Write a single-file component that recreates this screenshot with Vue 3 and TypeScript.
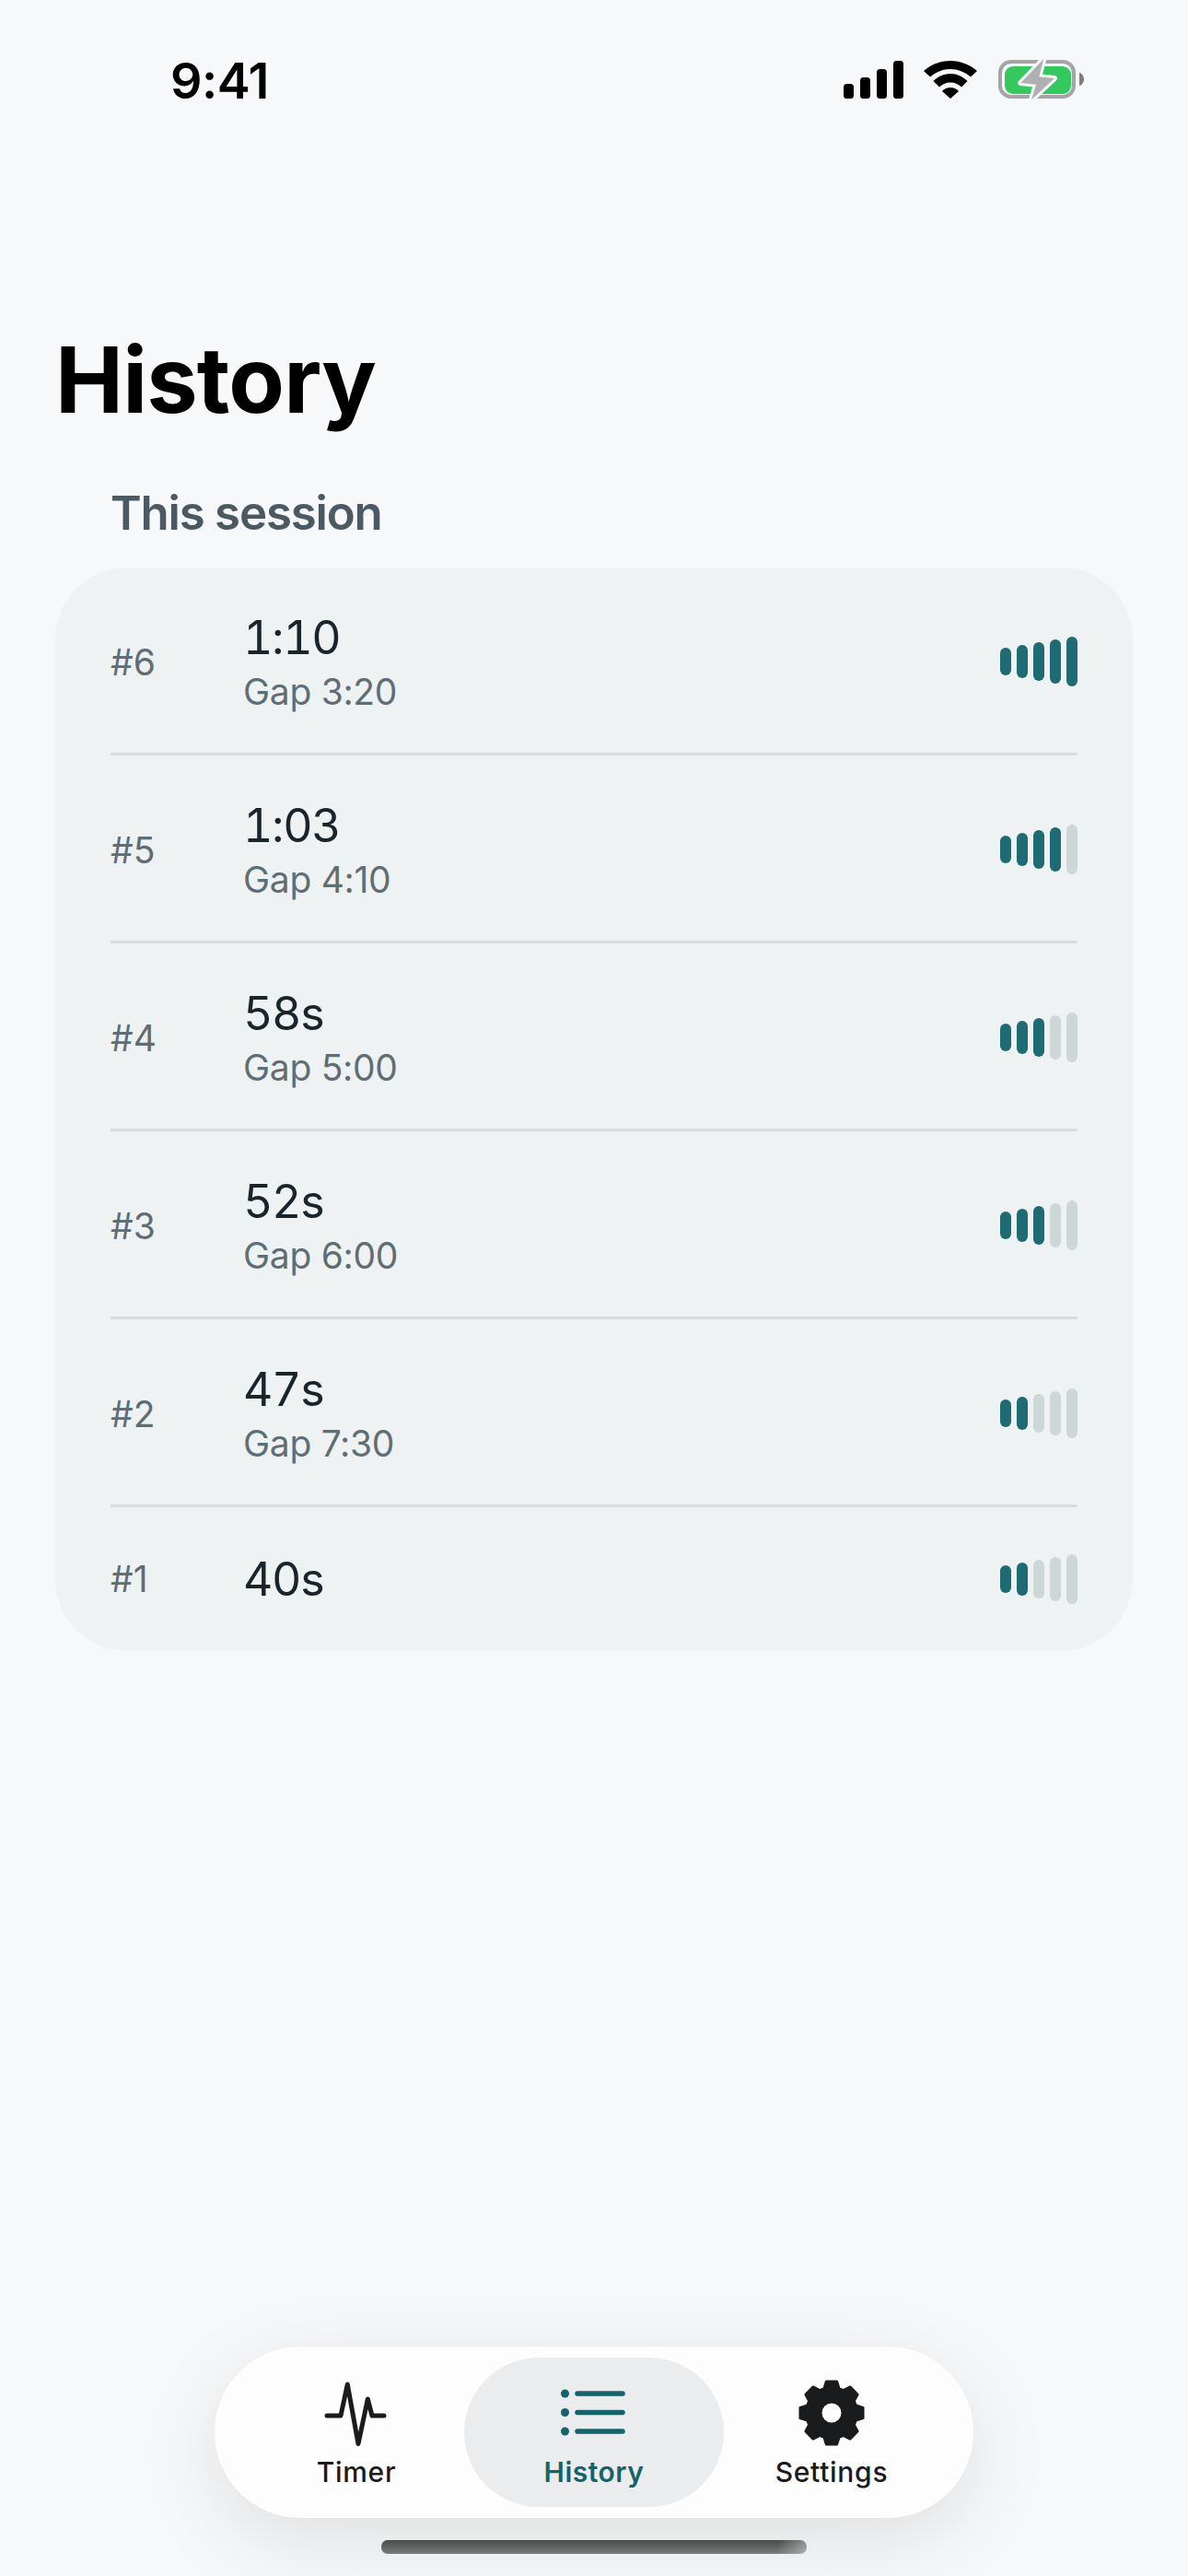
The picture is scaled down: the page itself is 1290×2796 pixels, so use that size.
<script setup lang="ts">
interface Row { rank: string; time: string; gap?: string; level: number }
const rows: Row[] = [
  { rank: '#6', time: '1:10', gap: 'Gap 3:20', level: 5 },
  { rank: '#5', time: '1:03', gap: 'Gap 4:10', level: 4 },
  { rank: '#4', time: '58s', gap: 'Gap 5:00', level: 3 },
  { rank: '#3', time: '52s', gap: 'Gap 6:00', level: 3 },
  { rank: '#2', time: '47s', gap: 'Gap 7:30', level: 2 },
  { rank: '#1', time: '40s', level: 2 },
]
const bars = [1, 2, 3, 4, 5]

function gearPath(): string {
  const cx = 40, cy = 40, teeth = 8
  const pts: string[] = []
  const rr = 27.5, ro = 34.5
  for (let i = 0; i < teeth; i++) {
    const a = (i * Math.PI * 2) / teeth - Math.PI / 2
    const spec: [number, number][] = [[rr, -0.30], [ro, -0.165], [ro, 0.165], [rr, 0.30]]
    for (const [r, d] of spec) {
      pts.push(`${(cx + r * Math.cos(a + d)).toFixed(2)} ${(cy + r * Math.sin(a + d)).toFixed(2)}`)
    }
  }
  return 'M' + pts.join('L') + 'Z M52 40a12 12 0 1 0-24 0a12 12 0 1 0 24 0Z'
}
const gear = gearPath()
</script>

<template>
  <div class="screen">
    <header class="status">
      <span class="clock">9:41</span>
      <div class="status-icons">
        <svg class="signal" width="65" height="41" viewBox="0 0 65 41">
          <rect x="0" y="25" width="11" height="16" rx="3.5" />
          <rect x="18" y="18" width="11" height="23" rx="3.5" />
          <rect x="36" y="9" width="11" height="32" rx="3.5" />
          <rect x="54" y="0" width="11" height="41" rx="3.5" />
        </svg>
        <svg class="wifi" width="58" height="41" viewBox="0 0 58 41">
          <path d="M29 0C18 0 8 4 0 11L7 17.500C13.500 12 21 9 29 9S44.500 12 51 17.500L58 11C50 4 40 0 29 0Z" />
          <path d="M29 14C22 14 15.500 17 10.500 22L17 28.500C20 25.500 24 23.500 29 23.500S38 25.500 41 28.500L47.500 22C42.500 17 36 14 29 14Z" />
          <path d="M29 29C25.500 29 22.500 30.500 20 33L29 41 38 33C35.500 30.500 32.500 29 29 29Z" />
        </svg>
        <svg class="battery" width="94" height="46" viewBox="0 0 94 46">
          <rect x="3" y="4" width="80" height="38" rx="12" fill="none" stroke="#a3a5a6" stroke-width="4" />
          <rect x="8" y="9" width="72" height="30" rx="9" fill="#34c85f" />
          <path d="M89 16v14c2.800-.6 5-3.500 5-7s-2.200-6.400-5-7Z" fill="#7c7e80" />
          <path d="M50.300 1 25.300 27 42 28.700 37 45.300 62 22 45.300 20.300Z" fill="#aeb0b2" stroke="#f7f8fa" stroke-width="6" stroke-linejoin="round" paint-order="stroke" />
        </svg>
      </div>
    </header>

    <h1 class="title">History</h1>
    <h2 class="section">This session</h2>

    <section class="card">
      <div v-for="row in rows" :key="row.rank" class="row">
        <span class="rank">{{ row.rank }}</span>
        <div class="info">
          <span class="time">{{ row.time }}</span>
          <span v-if="row.gap" class="gap">{{ row.gap }}</span>
        </div>
        <div class="bars">
          <i
            v-for="b in bars"
            :key="b"
            class="bar"
            :class="[`bar-${b}`, { on: b <= row.level }]"
          />
        </div>
      </div>
    </section>

    <div class="spacer" />

    <nav class="tabbar">
      <div class="tab">
        <svg class="tab-icon" width="78" height="78" viewBox="0 0 78 78">
          <path d="M7 42H22L29.300 8 41 72.500 51.300 24 56 42H69" fill="none" stroke="#191b1d" stroke-width="5" stroke-linecap="round" stroke-linejoin="round" />
        </svg>
        <span class="tab-label">Timer</span>
      </div>
      <div class="tab active">
        <svg class="tab-icon" width="78" height="78" viewBox="0 0 78 78">
          <g fill="#14636b">
            <circle cx="7.500" cy="18" r="4.500" />
            <circle cx="7.500" cy="38.500" r="4.500" />
            <circle cx="7.500" cy="59" r="4.500" />
          </g>
          <g stroke="#14636b" stroke-width="5.500" stroke-linecap="round">
            <path d="M21 18H70" />
            <path d="M21 38.500H70" />
            <path d="M21 59H70" />
          </g>
        </svg>
        <span class="tab-label">History</span>
      </div>
      <div class="tab">
        <svg class="tab-icon" width="78" height="78" viewBox="1 1 78 78">
          <path :d="gear" fill="#191b1d" fill-rule="evenodd" stroke="#191b1d" stroke-width="3" stroke-linejoin="round" />
        </svg>
        <span class="tab-label">Settings</span>
      </div>
    </nav>

    <div class="home-indicator" />
  </div>
</template>

<style>
html, body { margin: 0; background: #f7f8fa; }
</style>

<style scoped>
.screen {
  width: 1290px;
  height: 2796px;
  background: #f7f8fa;
  display: flex;
  flex-direction: column;
  font-family: Inter, "Liberation Sans", sans-serif;
  color: #000;
  overflow: hidden;
}
.status {
  height: 174px;
  padding: 57px 113px 0 185px;
  box-sizing: border-box;
  display: flex;
  justify-content: space-between;
  align-items: flex-start;
  flex: none;
}
.clock {
  font-size: 54px;
  line-height: 62px;
  font-weight: 600;
  letter-spacing: -0.5px;
}
.status-icons {
  display: flex;
  align-items: flex-start;
  padding-top: 9px;
}
.signal { fill: #000; margin-right: 22px; }
.wifi { fill: #000; margin-right: 22px; }
.battery { margin-top: -3px; }
.title {
  margin: 176px 0 0 60px;
  font-size: 99px;
  line-height: 124px;
  font-weight: 700;
  letter-spacing: -0.8px;
  flex: none;
}
.section {
  margin: 52px 0 0 120px;
  font-size: 51px;
  line-height: 62px;
  font-weight: 600;
  letter-spacing: -1.2px;
  color: #4b5a62;
  flex: none;
}
.card {
  margin: 28px 60px 0;
  padding: 0 60px;
  background: #eff2f3;
  border-radius: 78px;
  display: flex;
  flex-direction: column;
  flex: none;
}
.row {
  display: flex;
  align-items: center;
  padding: 46px 0 50px;
  border-bottom: 3px solid #d8dcdd;
}
.row:last-child { border-bottom: 0; padding: 48px 0; }
.rank {
  width: 144px;
  flex: none;
  font-size: 39px;
  line-height: 48px;
  color: #5f6e75;
  margin-top: 8px;
}
.row:last-child .rank,
.row:last-child .bars { margin-top: 0; }
.info {
  flex: 1;
  display: flex;
  flex-direction: column;
}
.time {
  font-size: 50px;
  line-height: 60px;
  color: #18252c;
  font-variant-numeric: tabular-nums;
  letter-spacing: -1.3px;
}
.gap {
  font-size: 39px;
  line-height: 45px;
  color: #5f6e75;
  letter-spacing: -0.3px;
  margin-top: 1px;
  padding-top: 5px;
  margin-bottom: -6px;
}
.bars {
  display: flex;
  align-items: center;
  gap: 6px;
  margin-top: 7px;
}
.bar {
  display: block;
  width: 12px;
  border-radius: 6px;
  background: #cdd7d8;
}
.bar.on { background: #1f6b73; }
.bar-1 { height: 30px; }
.bar-2 { height: 36px; }
.bar-3 { height: 42px; }
.bar-4 { height: 48px; }
.bar-5 { height: 54px; }
.spacer { flex: 1; }
.tabbar {
  align-self: center;
  width: 824px;
  height: 186px;
  box-sizing: border-box;
  padding: 12px 25px;
  border-radius: 93px;
  background: #fdfdfe;
  box-shadow: 0 24px 90px rgba(0, 0, 0, 0.1);
  display: grid;
  grid-template-columns: repeat(3, 258px);
  flex: none;
}
.tab {
  position: relative;
  height: 162px;
  display: flex;
  flex-direction: column;
  align-items: center;
  padding-top: 21px;
  box-sizing: border-box;
  color: #191b1d;
}
.tab.active { color: #14636b; }
.tab.active::before {
  content: "";
  position: absolute;
  inset: 0 -12px;
  border-radius: 81px;
  background: #ebecee;
}
.tab-icon { position: relative; display: block; }
.tab-label {
  position: relative;
  font-size: 30px;
  line-height: 36px;
  font-weight: 450;
  margin-top: 7px;
  letter-spacing: 0.7px;
}
.tab.active .tab-label { font-weight: 600; letter-spacing: 0.5px; }
.home-indicator {
  align-self: center;
  flex: none;
  width: 462px;
  height: 15px;
  margin: 24px 0 24px;
  border-radius: 7px;
  background:
    linear-gradient(100deg, rgba(255, 255, 255, 0) 93%, rgba(255, 255, 255, 0.4) 100%),
    linear-gradient(180deg, #4a4c4b 0%, #7a7a7a 100%);
}
</style>
